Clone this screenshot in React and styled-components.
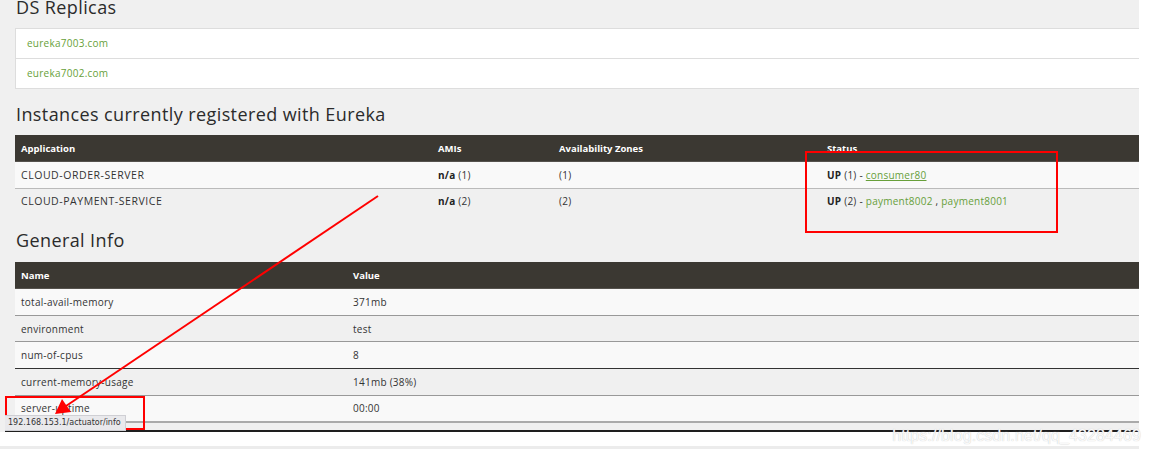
import React from 'react'
import styled, { createGlobalStyle } from 'styled-components'

const GlobalStyle = createGlobalStyle`
  html, body {
    margin: 0;
    padding: 0;
    background: #fff;
  }
  body {
    font-family: "Open Sans", "Liberation Sans", sans-serif;
    color: #333;
  }
`

const Screen = styled.div`
  position: relative;
  width: 1149px;
  height: 455px;
  overflow: hidden;
  background: #fff;
`

const Page = styled.div`
  width: 1139px;
  background: #f0f0f0;
  padding-left: 5px;
  box-sizing: border-box;
`

const Main = styled.main`
  padding-left: 10px;
  border-bottom: 2px solid #1e1e1e;
  padding-bottom: 7px;
`

const Heading = styled.h2`
  margin: ${({ $top }) => $top || 0}px 0 0;
  padding-left: 1px;
  font-family: "Open Sans", "Liberation Sans", sans-serif;
  font-weight: 500;
  font-size: 18px;
  letter-spacing: 0.4px;
  line-height: 20px;
  height: 20px;
  color: #2b2b2b;
`

const ReplicaList = styled.ul`
  list-style: none;
  margin: ${({ $top }) => $top || 0}px 0 0;
  padding: 0;
  background: #fff;
  border: 1px solid #ddd;
  border-right: none;
`

const Replica = styled.li`
  height: 29px;
  line-height: 29px;
  padding-left: 11px;
  font-size: 10px;
  letter-spacing: 0.25px;
  color: #679f3a;
  & + & {
    border-top: 1px solid #ddd;
  }
`

const Table = styled.table`
  width: 100%;
  border-collapse: collapse;
  table-layout: fixed;
  font-size: 10px;
  letter-spacing: 0.25px;
  margin-top: ${({ $top }) => $top || 0}px;
`

const HeadCell = styled.th`
  background: #3b3832;
  color: #fff;
  font-size: 9.5px;
  letter-spacing: 0;
  font-weight: 700;
  text-align: left;
  height: 26px;
  padding: 0 6px;
  border-bottom: 1px solid #55524d;
`

const Row = styled.tr`
  background: ${({ $alt }) => ($alt ? '#f0f0f0' : '#f9f9f9')};
  border-top: 1px solid ${({ $line }) => $line || '#999'};
`

const Cell = styled.td`
  height: 25.6px;
  padding: 0 6px;
  color: #333;
  white-space: nowrap;
  font-size: ${({ $caps }) => ($caps ? '10.5px' : '10px')};
  letter-spacing: ${({ $caps }) => ($caps ? '0.55px' : '0.25px')};
`

const Bold = styled.b`
  font-weight: 700;
  color: #222;
`

const Link = styled.a`
  color: #679f3a;
  text-decoration: ${({ $under }) => ($under ? 'underline' : 'none')};
`

const TableEnd = styled.div`
  height: 2px;
  background: #aaa;
`

const FooterLine = styled.div`
  margin-top: 14px;
  width: 1139px;
  height: 3px;
  background: #ececec;
`

const Highlight = styled.div`
  position: absolute;
  border: 2px solid #f00;
  left: ${({ $x }) => $x}px;
  top: ${({ $y }) => $y}px;
  width: ${({ $w }) => $w}px;
  height: ${({ $h }) => $h}px;
  box-sizing: border-box;
  pointer-events: none;
`

const Arrow = styled.svg`
  position: absolute;
  left: 0;
  top: 0;
  pointer-events: none;
`

const StatusTip = styled.div`
  position: absolute;
  left: 5px;
  top: 415px;
  height: 14px;
  line-height: 14px;
  padding: 0 4px 0 3px;
  background: #e9e9ec;
  border: 1px solid #cfcfd4;
  border-left: none;
  font-family: "DejaVu Sans", sans-serif;
  font-size: 8px;
  color: #333;
`

const Watermark = styled.div`
  position: absolute;
  right: 8px;
  top: 427px;
  font-family: "Liberation Sans", Arial, sans-serif;
  font-size: 16px;
  color: rgba(255, 255, 255, 0.92);
  text-shadow: 0 0 1px #bbb;
  letter-spacing: 0.1px;
`

const instances = [
  { app: 'CLOUD-ORDER-SERVER', amis: '(1)', zones: '(1)', count: '(1)', hosts: ['consumer80'], under: true },
  { app: 'CLOUD-PAYMENT-SERVICE', amis: '(2)', zones: '(2)', count: '(2)', hosts: ['payment8002', 'payment8001'] },
]

const info = [
  ['total-avail-memory', '371mb'],
  ['environment', 'test'],
  ['num-of-cpus', '8'],
  ['current-memory-usage', '141mb (38%)'],
  ['server-uptime', '00:00'],
]

const App = () => (
  <Screen>
    <GlobalStyle />
    <Page>
      <Main>
        <Heading $top={-3}>DS Replicas</Heading>
        <ReplicaList $top={11}>
          <Replica>eureka7003.com</Replica>
          <Replica>eureka7002.com</Replica>
        </ReplicaList>
        <Heading $top={15}>Instances currently registered with Eureka</Heading>
        <Table $top={11}>
          <colgroup>
            <col style={{ width: '417px' }} />
            <col style={{ width: '121px' }} />
            <col style={{ width: '268px' }} />
            <col />
          </colgroup>
          <thead>
            <tr>
              <HeadCell>Application</HeadCell>
              <HeadCell>AMIs</HeadCell>
              <HeadCell>Availability Zones</HeadCell>
              <HeadCell>Status</HeadCell>
            </tr>
          </thead>
          <tbody>
            {instances.map((it, i) => (
              <Row key={it.app} $alt={i % 2 === 1} $line={i === 1 ? '#bbb' : 'transparent'}>
                <Cell $caps>{it.app}</Cell>
                <Cell><Bold>n/a</Bold> {it.amis}</Cell>
                <Cell>{it.zones}</Cell>
                <Cell>
                  <Bold>UP</Bold> {it.count} -{' '}
                  {it.hosts.map((h, j) => (
                    <React.Fragment key={h}>
                      {j > 0 && ' , '}
                      <Link $under={it.under}>{h}</Link>
                    </React.Fragment>
                  ))}
                </Cell>
              </Row>
            ))}
          </tbody>
        </Table>
        <Heading $top={16}>General Info</Heading>
        <Table $top={12}>
          <colgroup>
            <col style={{ width: '332px' }} />
            <col />
          </colgroup>
          <thead>
            <tr>
              <HeadCell>Name</HeadCell>
              <HeadCell>Value</HeadCell>
            </tr>
          </thead>
          <tbody>
            {info.map(([k, v], i) => (
              <Row key={k} $alt={i % 2 === 1} $line={i === 0 ? 'transparent' : i === 3 ? '#333' : '#999'}>
                <Cell>{k}</Cell>
                <Cell>{v}</Cell>
              </Row>
            ))}
          </tbody>
        </Table>
        <TableEnd />
      </Main>
    </Page>
    <FooterLine />

    <Highlight $x={805} $y={151} $w={253} $h={82} />
    <Highlight $x={5} $y={396} $w={140} $h={34} />
    <Arrow width="1149" height="455" viewBox="0 0 1149 455">
      <line x1="378" y1="196" x2="66" y2="406" stroke="#f00" strokeWidth="2" />
      <polygon points="55,414 62,399 71,412" fill="#f00" />
    </Arrow>
    <StatusTip>192.168.153.1/actuator/info</StatusTip>
    <Watermark>https://blog.csdn.net/qq_43284469</Watermark>
  </Screen>
)

export default App
